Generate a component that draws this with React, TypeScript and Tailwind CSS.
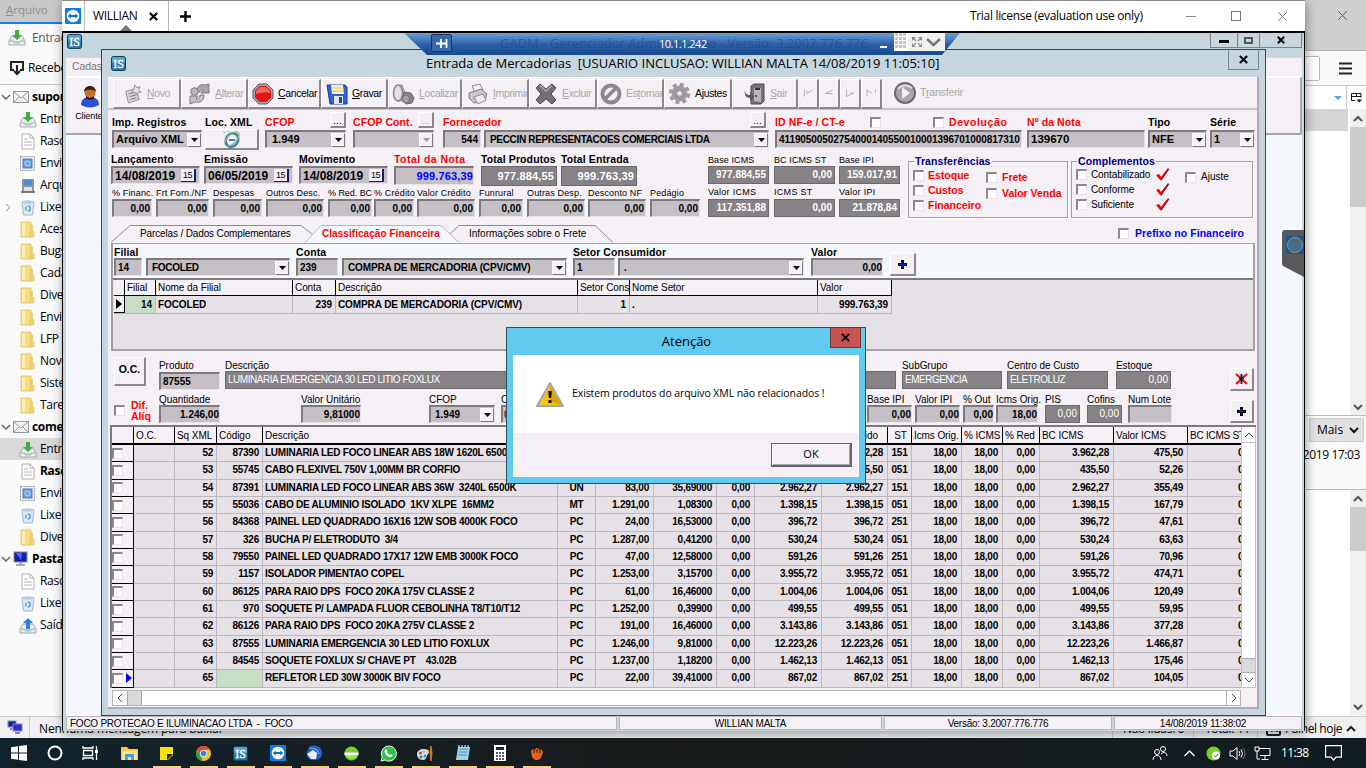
import React from 'react';

type Kids = { children?: React.ReactNode };

/* ---------- generic pieces ---------- */

const Check = ({ c = '' }: { c?: string }) => (
  <span className={`inline-block h-[11px] w-[11px] shrink-0 border-t-2 border-l-2 border-[#8b878b] border-r border-b border-r-[#e8e3e8] border-b-[#e8e3e8] bg-white ${c}`} />
);

const Drop = ({ dim = false }: { dim?: boolean }) => (
  <span className="flex h-[14px] w-[14px] shrink-0 items-center justify-center border border-t-white border-l-white border-r-[#7d797d] border-b-[#7d797d] bg-[#f5f0f5]">
    <svg width="7" height="4" viewBox="0 0 7 4"><path d="M0 0h7L3.5 4z" fill={dim ? '#a09ca0' : '#000'} /></svg>
  </span>
);

const Field = ({ c = '', children, drop, dim, tone = 'bg-[#c5c0c5] text-black' }: Kids & { c?: string; drop?: boolean; dim?: boolean; tone?: string }) => (
  <div className={`flex h-[18px] shrink-0 items-center overflow-hidden whitespace-pre border-t-2 border-l-2 border-r border-b border-t-[#7d797d] border-l-[#7d797d] border-r-[#e8e3e8] border-b-[#e8e3e8] pl-[2px] font-bold ${tone} ${c}`}>
    <span className="flex-1 leading-none">{children}</span>
    {drop && <Drop dim={dim} />}
  </div>
);

const Dark = ({ c = '', children }: Kids & { c?: string }) => (
  <div className={`flex h-[18px] shrink-0 items-center overflow-hidden whitespace-pre border border-[#6c696c] bg-[#868286] px-[2px] text-white ${c}`}>
    <span className="flex-1 leading-none">{children}</span>
  </div>
);

const Btn = ({ c = '', children }: Kids & { c?: string }) => (
  <div className={`flex shrink-0 items-center justify-center border border-t-white border-l-white border-r-2 border-b-2 border-r-[#8b878b] border-b-[#8b878b] bg-[#f5f0f5] ${c}`}>{children}</div>
);

const Col = ({ w, label, lc = '', children }: Kids & { w: string; label: React.ReactNode; lc?: string }) => (
  <div className={`shrink-0 ${w}`}>
    <div className={`flex items-center whitespace-pre leading-none ${lc}`}>{label}</div>
    {children}
  </div>
);

const Plus = () => (
  <svg width="11" height="11" viewBox="0 0 11 11"><path d="M4 1h3v3h3v3H7v3H4V7H1V4h3z" fill="#000" /><path d="M4 3h2v2h3v1H6v3H5V6H2V5h2z" fill="#1414e6" /></svg>
);

const X = ({ s = 10, w = 2 }: { s?: number; w?: number }) => (
  <svg width={s} height={s} viewBox="0 0 10 10"><path d="M1 1l8 8M9 1L1 9" stroke="currentColor" strokeWidth={w} fill="none" /></svg>
);

const IsLogo = ({ s = 15 }: { s?: number }) => (
  <svg width={s} height={s} viewBox="0 0 15 15">
    <rect x=".5" y=".5" width="14" height="14" rx="2" fill="#2d78a8" stroke="#123f5e" />
    <rect x="1" y="1" width="13" height="6" rx="1.5" fill="#5aa3cc" />
    <text x="7.5" y="12" fontSize="12" textAnchor="middle" fill="#fff" stroke="#fff" strokeWidth=".3" fontFamily="Liberation Serif, serif">IS</text>
  </svg>
);

const TvLogo = ({ s = 16 }: { s?: number }) => (
  <svg width={s} height={s} viewBox="0 0 16 16">
    <rect width="16" height="16" rx="1" fill="#0b7de3" />
    <circle cx="8" cy="8" r="6.3" fill="#fff" />
    <path d="M2.6 8l3.2-2.6v1.7h4.4V5.4L13.4 8l-3.2 2.6V8.900H5.800v1.700z" fill="#0b6fd0" />
  </svg>
);

/* ---------- mail client behind ---------- */

const Tray = ({ up = false }: { up?: boolean }) => (
  <svg width="18" height="17" viewBox="0 0 18 17">
    <path d="M4 7h10l3 5v4H1v-4z" fill="#e9eef2" stroke="#a3abb3" />
    <path d="M1.500 12h4l1 2h5l1-2h4" fill="#cdd6de" stroke="#a3abb3" />
    {up ? <path d="M7 12V6H4l5-5 5 5h-3v6z" fill="#2f7de0" /> : <path d="M7 1h4v5h3l-5 5-5-5h3z" fill="#3fae3a" />}
  </svg>
);
const Doc = () => (
  <svg width="16" height="17" viewBox="0 0 16 17"><path d="M2 1h8l4 4v11H2z" fill="#fafafa" stroke="#b4b4b4" /><path d="M10 1v4h4" fill="none" stroke="#b4b4b4" /><path d="M4 6h4M4 9h8M4 12h8" stroke="#bbb" /></svg>
);
const Stamp = () => (
  <svg width="17" height="17" viewBox="0 0 17 17"><rect x="1.500" y="1.500" width="14" height="14" fill="#f2f2f2" stroke="#999" strokeDasharray="2 1" /><rect x="4" y="4" width="9" height="9" fill="#6f9fd8" stroke="#4b7bb5" /><circle cx="8.500" cy="8.500" r="2.500" fill="none" stroke="#c6dcf5" /></svg>
);
const Bin = () => (
  <svg width="16" height="17" viewBox="0 0 16 17"><path d="M2 3h12l-1.500 13h-9z" fill="#dbe9f3" stroke="#9fb6c6" /><ellipse cx="8" cy="3" rx="6" ry="1.800" fill="#b7cddc" /><circle cx="8" cy="9.500" r="2.300" fill="none" stroke="#4d93cf" strokeWidth="1.300" strokeDasharray="3.500 1.300" /></svg>
);
const Folder = () => (
  <svg width="15" height="17" viewBox="0 0 15 17"><path d="M1 1h10v15H1z" fill="#f5dd85" stroke="#dfc062" strokeWidth=".8" /><path d="M2 2h3v13H2z" fill="#fbeeb0" /><path d="M11 4h1.500v5l1.500 2v5h-4v-5l1-2z" fill="#efd272" stroke="#dfc062" strokeWidth=".6" /></svg>
);
const Mail = () => (
  <svg width="16" height="12" viewBox="0 0 16 12"><rect x=".5" y=".5" width="15" height="11" fill="#f3f3f3" stroke="#979797" /><path d="M1 1l7 6 7-6M1 11l5-5M15 11l-5-5" fill="none" stroke="#979797" /></svg>
);
const Pc = () => (
  <svg width="15" height="16" viewBox="0 0 15 16"><rect x="1" y="1" width="13" height="10" fill="#1220b8" stroke="#8c8c8c" /><path d="M3 2l5 7 1-7z" fill="#4a6bff" /><path d="M6 11h3v2h3v2H3v-2h3z" fill="#aaa" /></svg>
);
const Archive = () => (
  <svg width="16" height="17" viewBox="0 0 16 17"><path d="M2 2h12v13H2z" fill="#8b9299" /><path d="M4 3h8v5H4z" fill="#4c8ed0" /><path d="M4 10h8v4H4z" fill="#e4e4e4" /><path d="M1 14h14v2H1z" fill="#777" /></svg>
);

const tree: [string, string, boolean?][] = [
  ['acc', 'suporte', true], ['in', 'Entrada'], ['doc', 'Rascunhos'], ['sent', 'Enviados'], ['arc', 'Arquivos'], ['bin', 'Lixeira'],
  ['f', 'Acesso'], ['f', 'Bugs'], ['f', 'Cadastro'], ['f', 'Diversos'], ['f', 'Enviados'], ['f', 'LFP'], ['f', 'Novos'], ['f', 'Sistema'], ['f', 'Tarefas'],
  ['acc', 'comercial', true], ['in', 'Entrada'], ['doc', 'Rascunhos', true], ['sent', 'Enviados'], ['bin', 'Lixeira'], ['f', 'Diversos'],
  ['pc', 'Pastas', true], ['doc', 'Rascunhos'], ['bin', 'Lixeira'], ['out', 'Saída'],
];
const treeIcon: Record<string, React.ReactNode> = {
  acc: <Mail />, in: <Tray />, doc: <Doc />, sent: <Stamp />, arc: <Archive />, bin: <Bin />, f: <Folder />, pc: <Pc />, out: <Tray up />,
};

const Chev = ({ d, c = '#404040', w = 2 }: { d: 'u' | 'd'; c?: string; w?: number }) => (
  <svg width="10" height="7" viewBox="0 0 10 7"><path d={d === 'u' ? 'M1 6l4-4 4 4' : 'M1 1l4 4 4-4'} fill="none" stroke={c} strokeWidth={w} /></svg>
);

const MailClient = () => (
  <div className="flex h-[738px] flex-col bg-white font-['Open_Sans','Noto_Sans',sans-serif] text-[12px] text-black">
    <div className="flex h-[716px] justify-between">
      <div className="w-[300px] bg-[#fafafa]">
        <div className="h-[22px] bg-[#c8c8c8] pl-[6px] text-[11.500px] leading-[20px] text-[#8f8f8f]"><u>A</u>rquivo</div>
        <div className="h-[2px] bg-[#0a84ff]" />
        <div className="flex h-[27px] items-center gap-[6px] pl-[8px] tracking-[-0.3px] text-[#555]"><Tray />Entrada</div>
        <div className="flex h-[34px] items-center gap-[3px] border-b border-[#c8c8c8] pl-[9px] tracking-[-0.3px]">
          <svg width="16" height="16" viewBox="0 0 16 16"><path d="M5 10H2V2h12v8h-3" fill="none" stroke="#222" strokeWidth="2" /><path d="M8 5v9M5 11l3 3 3-3" fill="none" stroke="#222" strokeWidth="2" /></svg>
          Receber
        </div>
        <div className="pt-[1px]">
          {tree.map(([k, t, b], i) => {
            const top = k === 'acc' || k === 'pc';
            return (
              <div key={i} className={`flex h-[22px] items-center whitespace-nowrap tracking-[-0.3px] ${b ? 'font-bold' : ''} ${i === 16 ? 'bg-[#d9d9d9]' : ''}`}>
                <span className={`flex shrink-0 items-center justify-center ${top ? 'w-[12px]' : 'w-[17px]'}`}>
                  {top && <Chev d="d" c="#666" w={1.500} />}
                  {i === 5 && <svg className="-ml-px" width="6" height="9" viewBox="0 0 6 9"><path d="M1 1l4 3.500-4 3.500" fill="none" stroke="#999" /></svg>}
                </span>
                <span className={`flex shrink-0 justify-center ${top ? 'w-[17px]' : 'w-[21px]'}`}>{treeIcon[k]}</span>
                <span className={top ? 'pl-[3px]' : 'pl-[2px]'}>{t}</span>
              </div>
            );
          })}
        </div>
      </div>
      <div className="flex w-[166px] flex-col">
        <div className="flex h-[51px] items-start justify-end border-b border-[#b4b4b4] bg-[#cfcfcf] pt-[10px] pr-[18px] text-[#666]"><X s={11} w={0.9} /></div>
        <div className="flex h-[34px] items-center justify-end bg-[#f9f9f9] pr-[14px]">
          <span className="mr-[19px] h-[25px] w-[80px] rounded-[2px] border border-[#b8b8b8] bg-white" />
          <svg width="13" height="13" viewBox="0 0 13 13"><path d="M0 1.500h13M0 6.500h13M0 11.500h13" stroke="#222" strokeWidth="2" /></svg>
        </div>
        <div className="flex h-[24px] items-center justify-end border-t border-[#c8c8c8] pr-[4px]">
          <svg width="8" height="4" viewBox="0 0 8 4"><path d="M0 0h8L4 4z" fill="#5aa7d6" /></svg>
          <span className="mx-[4px] h-full w-px bg-[#ccc]" />
          <svg width="11" height="11" viewBox="0 0 11 11"><path d="M.5 8.500V1.500h9.500v4M.5 4.500h9.500M5.500 1.500v3M4 8.500H.5" fill="none" stroke="#111" /><path d="M5.500 7.500h5.500l-2.750 3z" fill="#111" /></svg>
        </div>
        <div className="flex h-[306px]">
          <div className="flex-1 pr-[2px]"><div className="h-[22px] bg-[#d5d5d5]" /></div>
          <div className="flex w-[16px] flex-col items-center justify-between bg-[#f0f0f0] pb-[4px]">
            <div className="flex w-full flex-col items-center pt-[6px]"><Chev d="u" c="#555" /><span className="mt-[5px] h-[80px] w-full bg-[#cdcdcd]" /></div>
            <Chev d="d" c="#555" />
          </div>
        </div>
        <div className="flex h-[75px] flex-col items-end border-t border-b border-[#b4bccb] bg-[#fafafa] pt-[2px]">
          <div className="mr-[2px] flex h-[24px] w-[55px] items-center justify-center gap-[6px] border border-[#ccc] bg-[#e1e1e1] pl-[3px]">Mais<Chev d="d" c="#111" /></div>
          <div className="pt-[4px] pr-[6px] tracking-[-0.4px]">02/05/2019 17:03</div>
        </div>
        <div className="flex flex-1 justify-end">
          <div className="flex w-[16px] flex-col items-center justify-between bg-[#f0f0f0] pb-[5px]">
            <div className="flex w-full flex-col items-center pt-[5px]"><Chev d="u" c="#555" /><span className="mt-[5px] h-[44px] w-full bg-[#cdcdcd]" /></div>
            <Chev d="d" c="#555" />
          </div>
        </div>
      </div>
    </div>
    <div className="flex h-[22px] items-center border-t border-[#ccc] bg-[#f0f0f0] tracking-[-0.3px]">
      <span className="flex w-[29px] justify-center">
        <svg width="16" height="15" viewBox="0 0 16 15"><rect x="1" y="1" width="8" height="6" fill="#1220b8" stroke="#889" /><rect x="6" y="4" width="9" height="7" fill="#2233d8" stroke="#889" /><path d="M8 12h5v2H8zM3 8h2v2H3z" fill="#888" /></svg>
      </span>
      <span className="h-full w-px bg-[#ccc]" />
      <span className="w-[1082px] pt-[2px] pl-[9px] text-[12px] tracking-[-0.1px]">Nenhuma mensagem para baixar</span>
      <span className="flex h-full w-[81px] items-center border-l border-[#ccc] pt-[2px] pl-[10px]">Não lidas: 0</span>
      <span className="flex h-full w-[64px] items-center border-l border-[#ccc] pt-[2px] pl-[11px]">Total: 11</span>
      <span className="flex h-full flex-1 items-center gap-[4px] border-l border-[#ccc] pt-[2px] pl-[8px]">
        <span className="flex h-[15px] w-[15px] items-end justify-center rounded-[2px] border-2 border-[#222] text-[9px] leading-[10px] font-bold">14</span>
        <span className="tracking-[-0.400px]">Painel hoje</span> <Chev d="u" c="#222" />
      </span>
    </div>
  </div>
);

/* ---------- toolbar ---------- */

const icoNovo = <svg width="20" height="22" viewBox="0 0 22 22"><path d="M3 8l11-3 4 12-12 4z" fill="#d6d3d6" stroke="#8d8a8d" /><path d="M6 11l7-2M7 14l7-2M8 17l7-2" stroke="#8d8a8d" strokeWidth="1.300" /><path d="M13 1l2 3 4-1-2 3 3 3-4 0-1 3-2-3-4 0 3-3z" fill="#e6e3e6" stroke="#8d8a8d" /></svg>;
const icoAlt = <svg width="23" height="22" viewBox="0 0 23 22"><path d="M9 8c0-5 4-7 8-6l4-1v9h-8l2-3c-2-1-3 0-3 2z" fill="#a9a6a9" stroke="#7d7a7d" /><circle cx="6.500" cy="8.500" r="3.800" fill="#b9b6b9" stroke="#7d7a7d" /><path d="M16 12c0 6-4 8-9 7l-5 2v-8h8l-2 3c2 1 4-1 4-4z" fill="#c6c3c6" stroke="#7d7a7d" /></svg>;
const icoCan = <svg width="22" height="22" viewBox="0 0 22 22"><path d="M7 1h8l6 6v8l-6 6H7l-6-6V7z" fill="#a8a8a8" stroke="#5a5a5a" /><path d="M7.500 3h7l4.500 4.500v7L14.500 19h-7L3 14.500v-7z" fill="#e01414" /><path d="M8 4h6l4 4v2c-5-2-9 0-14 1V8z" fill="#f46a5a" /></svg>;
const icoGra = <svg width="22" height="22" viewBox="0 0 22 22"><path d="M1 2h18l2 2v17H4z" fill="#2f62d8" stroke="#173a94" /><path d="M5 2h12l1 9H6z" fill="#f6f1c4" /><path d="M6 5h10M7 8h10" stroke="#d3c568" /><path d="M8 13h9v8H8z" fill="#dfe6f0" /><path d="M13 14h3v6h-3z" fill="#1d46a8" /></svg>;
const icoLoc = <svg width="23" height="22" viewBox="0 0 23 22"><path d="M6 2h4l3 8v5l-3 3H6z" fill="#c6c3c6" stroke="#8a878a" /><ellipse cx="6" cy="10" rx="4.500" ry="8" fill="#e3e0e3" stroke="#8a878a" strokeWidth="1.500" /><path d="M12 9l7 1 3 5-2 5-6 1-4-4z" fill="#8a878a" stroke="#6c696c" /><ellipse cx="14" cy="16" rx="3.500" ry="4" fill="#a9a6a9" stroke="#6c696c" /></svg>;
const icoImp = <svg width="22" height="22" viewBox="0 0 22 22"><path d="M5 3l8-2 3 6-8 3z" fill="#eee" stroke="#8d8a8d" /><path d="M2 10l12-4 6 5-2 6-11 3-5-5z" fill="#c9c6c9" stroke="#7d7a7d" /><path d="M7 14l9-3 3 6-8 4z" fill="#efecef" stroke="#8d8a8d" /></svg>;
const icoExc = <svg width="24" height="24" viewBox="0 0 24 24"><path d="M6 2l6 5 6-5 4 4-5 6 5 6-4 4-6-5-6 5-4-4 5-6-5-6z" fill="#747174" stroke="#4e4c4e" strokeLinejoin="round" /><path d="M6 3.500l6 5.500 6-5.500" fill="none" stroke="#aaa7aa" strokeWidth="1.500" /></svg>;
const icoEst = <svg width="22" height="22" viewBox="0 0 22 22"><circle cx="11" cy="11" r="8.500" fill="#f0edf0" stroke="#8d8a8d" strokeWidth="4" /><path d="M5 16L16 5" stroke="#8d8a8d" strokeWidth="3.500" /></svg>;
const icoAju = <svg width="23" height="23" viewBox="0 0 23 23"><circle cx="11.500" cy="11.500" r="9" fill="none" stroke="#a09da0" strokeWidth="3.500" strokeDasharray="4 3.070" /><circle cx="11.500" cy="11.500" r="5.800" fill="#c6c3c6" stroke="#a09da0" strokeWidth="4.500" /><circle cx="11.500" cy="11.500" r="4" fill="#b4b1b4" stroke="#858285" /><circle cx="11.500" cy="11.500" r="2" fill="#efecef" /></svg>;
const icoSai = <svg width="22" height="22" viewBox="0 0 22 22"><path d="M7 3l3-2h10v17l-3 3H7z" fill="#767376" stroke="#4a484a" /><path d="M10 5h7v14l-7-1z" fill="#bbb8bb" /><path d="M11 6h5" stroke="#333" strokeWidth="2" /><circle cx="12" cy="13" r="1" fill="#333" /><path d="M1 7c0 4 2 5 5 5v-3l4 5-4 4v-3c-4 0-6-3-5-8z" fill="#5a585a" /></svg>;
const icoTra = <svg width="24" height="24" viewBox="0 0 24 24"><circle cx="12" cy="12" r="10" fill="#a9a6a9" stroke="#6c696c" strokeWidth="2" /><path d="M5 8c3-4 10-5 14-1" stroke="#dedbde" strokeWidth="2" fill="none" /><path d="M9 6l8 6-8 6z" fill="#f2eff2" /></svg>;

const tools: [string, React.ReactNode, string, string, string, boolean][] = [
  ['w-[68px] pl-[9px]', icoNovo, '', 'N', 'ovo', false],
  ['w-[67px] pl-[6px]', icoAlt, '', 'A', 'lterar', false],
  ['w-[73px] pl-[3px]', icoCan, '', 'C', 'ancelar', true],
  ['w-[67px] pl-[4px]', icoGra, '', 'G', 'ravar', true],
  ['w-[74px] pl-[3px]', icoLoc, '', 'L', 'ocalizar', false],
  ['w-[67px] pl-[4px]', icoImp, '', 'I', 'mprimir', false],
  ['w-[68px] pl-[4px]', icoExc, '', 'E', 'xcluir', false],
  ['w-[67px] pl-[2px]', icoEst, 'Es', 't', 'ornar', false],
  ['w-[68px] pl-[3px]', icoAju, 'A', 'j', 'ustes', true],
  ['w-[66px] pl-[11px]', icoSai, '', 'S', 'air', false],
];

const Toolbar = () => (
  <div className="flex h-[33px] border-b-2 border-[#c9c4c9] border-t border-t-[#fff] pt-px pl-[5px] text-[10.500px]">
    {tools.map(([w, ic, p, u, t, on], i) => (
      <Btn key={i} c={`h-[30px] !justify-start gap-[4px] overflow-hidden whitespace-nowrap tracking-[-0.350px] ${on ? 'text-black' : 'text-[#aaa6aa]'} ${w}`}>
        <span className="shrink-0">{ic}</span>
        <span>{p}<u>{u}</u>{t}</span>
      </Btn>
    ))}
    {['M3.500 2.500v7M11.500 3L6 6.500M6 6.500v-3', 'M11 3L3.500 6.500h7', 'M3.500 2.500v7l7-3.500H7', 'M3 9.500V3l5 3.500M11.500 2.500v3'].map((d, i) => (
      <Btn key={i} c="h-[30px] w-[21px]"><svg width="14" height="13" viewBox="0 0 14 13"><path d={d} fill="none" stroke="#b3afb3" /></svg></Btn>
    ))}
    <div className="flex items-center gap-[3px] pb-px pl-[11px] tracking-[-0.150px] text-[#aaa6aa]">{icoTra}<span>T<u>r</u>ansferir</span></div>
  </div>
);

/* ---------- form rows ---------- */

const L1 = 'h-[20px] pt-[4px] text-[10.500px] font-bold tracking-[0.1px]';
const L2 = 'h-[15px] pt-[2px] text-[10.500px] font-bold tracking-[0.1px]';
const L3 = 'h-[12px] text-[9px] tracking-[0.15px]';
const R = 'text-[#ff0000]';

const Dots = ({ c, dim = false }: { c: string; dim?: boolean }) => (
  <Btn c={`h-[16px] w-[16px] mt-[-4px] pt-[3px] text-[10px] leading-none font-normal ${dim ? 'text-[#999]' : 'text-black'} ${c}`}>...</Btn>
);

const Row1 = () => (
  <div className="flex h-[41px] pl-[4px] text-[11px]">
    <Col w="w-[93px]" label="Imp. Registros" lc={L1}><Field c="w-[90px]" drop>Arquivo XML</Field></Col>
    <Col w="w-[60px]" label="Loc. XML" lc={L1}>
      <Btn c="-mt-px h-[21px] w-[54px]">
        <svg width="22" height="19" viewBox="0 0 22 19"><ellipse cx="11" cy="10" rx="6" ry="7" transform="rotate(30 11 10)" fill="none" stroke="#3f7fae" strokeWidth="2.500" /><ellipse cx="11" cy="9" rx="9" ry="4.500" transform="rotate(-45 11 9)" fill="none" stroke="#8fb67a" strokeWidth="1.300" /><path d="M8 10h6" stroke="#3f7fae" strokeWidth="2" /><path d="M2 2l3 1M6 1l2 1" stroke="#8cc" /></svg>
      </Btn>
    </Col>
    <Col w="w-[88px]" label={<><span className="flex-1">CFOP</span><Dots c="mr-[7px]" /></>} lc={`${L1} ${R}`}><Field c="w-[81px] pl-[5px]" drop>1.949</Field></Col>
    <Col w="w-[90px]" label={<><span className="flex-1">CFOP Cont.</span><Dots c="mr-[9px]" dim /></>} lc={`${L1} ${R}`}><Field c="w-[81px]" drop dim /></Col>
    <Col w="w-[41px]" label="Fornecedor" lc={`${L1} ${R}`}><Field c="w-[38px] pr-[2px] text-right text-[10px]">544</Field></Col>
    <Col w="w-[291px]" label={<><span className="flex-1" /><Dots c="mr-[9px]" /></>} lc={L1}><Field c="w-[285px] pl-[4px] text-[10px] tracking-[-0.330px]" drop>PECCIN REPRESENTACOES COMERCIAIS LTDA</Field></Col>
    <Col w="w-[252px]" label={<><span className="w-[95px]">ID NF-e / CT-e</span><Check c="mr-[52px]" /><Check c="mr-[5px]" /><span className="tracking-[0.600px]">Devolução</span></>} lc={`${L1} ${R}`}>
      <Field c="w-[247px] pl-0 text-[10px] tracking-[-0.080px]">41190500502754000140550010001396701000817310</Field>
    </Col>
    <Col w="w-[121px]" label="Nº da Nota" lc={`${L1} ${R}`}><Field c="w-[118px] pl-0 text-[11.500px]">139670</Field></Col>
    <Col w="w-[62px]" label="Tipo" lc={L1}><Field c="w-[59px]" drop>NFE</Field></Col>
    <Col w="w-[45px]" label="Série" lc={L1}><Field c="w-[45px] pl-0" drop>1</Field></Col>
  </div>
);

const Cal = () => <span className="mr-[3px] inline-flex h-[13px] w-[15px] items-center justify-center border-r-2 border-b border-[#1a1a6a] bg-[#f5f0f5] text-[9px] leading-none font-normal tracking-[-0.5px]">15</span>;
const DateF = ({ children }: Kids) => (
  <Field c="w-[89px] pl-0 text-[12px]"><span className="flex items-center justify-between">{children}<Cal /></span></Field>
);

const small: [string, string, string][] = [
  ['w-[44px]', '% Financ.', 'w-[40px]'], ['w-[57px]', 'Frt Forn./NF', 'w-[53px]'], ['w-[53px]', 'Despesas', 'w-[49px]'], ['w-[62px]', 'Outros Desc.', 'w-[58px]'],
  ['w-[46px]', '% Red. BC', 'w-[44px]'], ['w-[43px]', '% Crédito', 'w-[40px]'], ['w-[62px]', 'Valor Crédito', 'w-[58px]'], ['w-[48px]', 'Funrural', 'w-[44px]'],
  ['w-[61px]', 'Outras Desp.', 'w-[58px]'], ['w-[62px]', 'Desconto NF', 'w-[58px]'], ['w-[52px]', 'Pedágio', 'w-[50px]'],
];

const taxes: [string, string][] = [['Base ICMS', '977.884,55'], ['BC ICMS ST', '0,00'], ['Base IPI', '159.017,91'], ['Valor ICMS', '117.351,88'], ['ICMS ST', '0,00'], ['Valor IPI', '21.878,84']];

const Tick = () => <svg width="15" height="13" viewBox="0 0 15 13"><path d="M1 7l3-1 2 3 7-9 1 1-7.500 11H5z" fill="#f00000" /><path d="M6 12.500L14 1" stroke="#300" strokeWidth=".7" /></svg>;

const Group = ({ c, title, children }: Kids & { c: string; title: string }) => (
  <fieldset className={`h-[62px] border border-[#a39fa3] px-[4px] shadow-[1px_1px_0_#fff] ${c}`}>
    <legend className="ml-[1px] px-px text-[10.500px] leading-[10px] font-bold tracking-[0.1px] text-[#00007b]">{title}</legend>
    {children}
  </fieldset>
);

const Rows23 = () => (
  <div className="flex h-[68px]">
    <div className="w-[600px] shrink-0">
      <div className="flex h-[36px] pl-[3px]">
        <Col w="w-[93px]" label="Lançamento" lc={L2}><DateF>14/08/2019</DateF></Col>
        <Col w="w-[95px]" label="Emissão" lc={L2}><DateF>06/05/2019</DateF></Col>
        <Col w="w-[95px]" label="Movimento" lc={L2}><DateF>14/08/2019</DateF></Col>
        <Col w="w-[87px]" label="Total da Nota" lc={`${L2} tracking-[0.450px] ${R}`}><Field c="h-[19px] w-[80px] text-right text-[11px] tracking-[0.150px]" tone="bg-[#c5c0c5] text-[#0000ff]">999.763,39</Field></Col>
        <Col w="w-[80px]" label="Total Produtos" lc={L2}><Dark c="h-[20px] w-[76px] text-right text-[11px] font-bold tracking-[0.150px]">977.884,55</Dark></Col>
        <Col w="w-[76px]" label="Total Entrada" lc={L2}><Dark c="h-[20px] w-[76px] text-right text-[11px] font-bold tracking-[0.150px]">999.763,39</Dark></Col>
      </div>
      <div className="flex pl-[4px]">
        {small.map(([w, l, f], i) => <Col key={l} w={w} label={l} lc={i === 4 ? 'h-[12px] text-[9px] tracking-[-0.050px]' : L3}><Field c={`pr-px text-right text-[10px] ${f}`}>0,00</Field></Col>)}
      </div>
    </div>
    <div className="grid w-[200px] shrink-0 grid-cols-[66px_65px_65px] content-start">
      {taxes.map(([l, v], i) => (
        <Col key={l} w={i < 3 ? 'h-[34px]' : ''} label={l} lc={i < 3 ? 'h-[15px] pt-[3px] text-[9px] tracking-[0.1px]' : 'h-[14px] text-[9px] tracking-[0.3px]'}>
          <Dark c="w-[61px] text-right text-[10px] font-bold">{v}</Dark>
        </Col>
      ))}
    </div>
    <Group c="mt-[5px] w-[160px] shrink-0" title="Transferências">
      <div className="flex gap-[16px] text-[10.500px] leading-none font-bold text-[#ff0000]">
        <div className="flex w-[57px] flex-col gap-[4px] pt-[4px]">
          {['Estoque', 'Custos', 'Financeiro'].map((t) => <span key={t} className="flex items-center gap-[4px]"><Check />{t}</span>)}
        </div>
        <div className="flex flex-col gap-[5px] pt-[6px]">
          {['Frete', 'Valor Venda'].map((t) => <span key={t} className="flex items-center gap-[5px] whitespace-nowrap"><Check />{t}</span>)}
        </div>
      </div>
    </Group>
    <Group c="mt-[5px] ml-[3px] w-[182px] shrink-0" title="Complementos">
      <div className="flex text-[10px] leading-none">
        <div className="flex w-[109px] flex-col gap-[2px] pt-[2px]">
          {['Contabilizado', 'Conforme', 'Suficiente'].map((t) => <span key={t} className="flex h-[13px] items-center gap-[4px]"><Check /><span className="w-[60px] tracking-[-0.100px]">{t}</span><Tick /></span>)}
        </div>
        <span className="flex h-[18px] items-center gap-[5px] pt-[4px]"><Check />Ajuste</span>
      </div>
    </Group>
  </div>
);

const Tabs = () => (
  <div className="flex h-[24px] items-end">
    <div className="relative h-[18px] w-[1010px] shrink-0">
      <svg className="absolute top-0 left-0" width="520" height="18" viewBox="0 0 520 18">
        <path d="M3 17.500L22 .5H193L204 9" fill="none" stroke="#8f8b8f" />
        <path d="M342 9l9-8.500H487L505 17.500" fill="none" stroke="#8f8b8f" />
        <path d="M197 18L213 .5H333L351 18z" fill="#f5f9fe" />
        <path d="M197 17.500L213 .5H333L351 17.500" fill="none" stroke="#b9b5b9" />
      </svg>
      <div className="relative flex h-full items-center text-[10px] leading-none whitespace-nowrap">
        <span className="w-[182px] pl-[32px] tracking-[-0.14px]">Parcelas / Dados Complementares</span>
        <span className="w-[147px] pl-[32px] font-bold tracking-[0.05px] text-[#ff0000]">Classificação Financeira</span>
        <span className="pl-[32px]">Informações sobre o Frete</span>
      </div>
    </div>
    <div className="mb-[4px] flex items-center gap-[6px] text-[10.500px] leading-none font-bold tracking-[0.080px] whitespace-nowrap text-[#0000ff]"><Check />Prefixo no Financeiro</div>
  </div>
);

const LP = 'h-[14px] pt-[2px] text-[10.500px] font-bold tracking-[0.1px]';
const gridCols = 'grid grid-cols-[11px_31px_137px_43px_242px_52px_188px_74px]';
const Panel = () => (
  <div className="ml-[3px] flex h-[108px] w-[1144px] flex-col border-t border-l-2 border-r-2 border-b-2 border-[#a39fa3] bg-[#f5f9fe] text-[10px]">
    <div className="flex h-[34px] pl-[1px]">
      <Col w="w-[32px]" label="Filial" lc={LP}><Field c="w-[28px] pl-0">14</Field></Col>
      <Col w="w-[150px]" label=" " lc={LP}><Field c="w-[144px] pl-[4px] tracking-[-0.3px]" drop>FOCOLED</Field></Col>
      <Col w="w-[46px]" label="Conta" lc={LP}><Field c="w-[42px] pl-0">239</Field></Col>
      <Col w="w-[231px]" label=" " lc={LP}><Field c="w-[225px] pl-[4px] tracking-[-0.15px]" drop>COMPRA DE MERCADORIA (CPV/CMV)</Field></Col>
      <Col w="w-[45px]" label="Setor Consumidor" lc={LP}><Field c="w-[42px] pl-0">1</Field></Col>
      <Col w="w-[193px]" label=" " lc={LP}><Field c="w-[186px] pl-[4px]" drop>.</Field></Col>
      <Col w="w-[79px]" label="Valor" lc={LP}><Field c="w-[72px] text-right">0,00</Field></Col>
      <Btn c="mt-[9px] h-[23px] w-[26px]"><Plus /></Btn>
    </div>
    <div className="flex-1 border-t-2 border-[#7d797d] bg-[#e6e1e6] pl-px">
      <div className={`${gridCols} h-[16px] w-[778px] border-b border-black bg-[#f5f0f5] leading-[15px]`}>
        {['', 'Filial', 'Nome da Filial', 'Conta', 'Descrição', 'Setor Cons', 'Nome Setor', 'Valor'].map((t, i) => <span key={i} className="overflow-hidden border-r border-black pl-[2px] tracking-[-0.080px] whitespace-nowrap">{t}</span>)}
      </div>
      <div className={`${gridCols} h-[18px] w-[778px] border-b border-[#bcb7bc] leading-[17px] font-bold tracking-[-0.1px]`}>
        <span className="flex items-center border-r border-b border-black bg-[#f5f0f5] pl-[2px]"><svg width="6" height="10"><path d="M0 0l6 5-6 5z" /></svg></span>
        {['14', 'FOCOLED', '239', 'COMPRA DE MERCADORIA (CPV/CMV)', '1', '.', '999.763,39'].map((t, i) => (
          <span key={i} className={`border-r border-[#bcb7bc] pr-[3px] pl-[2px] whitespace-nowrap ${i % 2 === 0 ? 'text-right' : ''} ${i === 0 ? 'bg-[#c6dfc4]' : ''}`}>{t}</span>
        ))}
      </div>
    </div>
  </div>
);

const LI = 'h-[11px] text-[10px] tracking-[-0.05px]';
const Item = () => (
  <div className="h-[74px] text-[10px]">
    <div className="flex h-[41px] pt-[5px] pl-[6px]">
      <Btn c="mt-px h-[29px] w-[32px] pb-[2px] text-[10.500px] font-bold">O.C.</Btn>
      <div className="flex pt-[4px] pl-[13px]">
        <Col w="w-[66px]" label="Produto" lc={LI}><Field c="mt-px w-[61px] pl-0">87555</Field></Col>
        <Col w="w-[677px]" label="Descrição" lc={LI}><Dark c="w-[671px] px-0 tracking-[-0.460px]">LUMINARIA EMERGENCIA 30 LED LITIO FOXLUX</Dark></Col>
        <Col w="w-[105px]" label="SubGrupo" lc={LI}><Dark c="w-[100px] px-0 tracking-[-0.5px]">EMERGENCIA</Dark></Col>
        <Col w="w-[109px]" label="Centro de Custo" lc={LI}><Dark c="w-[101px] px-0 tracking-[-0.4px]">ELETROLUZ</Dark></Col>
        <Col w="w-[114px]" label="Estoque" lc={LI}><Dark c="w-[55px] text-right">0,00</Dark></Col>
        <Btn c="mt-[8px] h-[23px] w-[24px]">
          <svg width="13" height="12" viewBox="0 0 13 12"><path d="M1 1l11 10M12 1L1 11" stroke="#ff0000" strokeWidth="2" /><path d="M5.500 1h2v3l1.500 2-1.500 2v3h-2V8L4 6l1.500-2z" fill="#222" /></svg>
        </Btn>
      </div>
    </div>
    <div className="flex pt-[2px] pl-[6px]">
      <div className="flex w-[45px] items-center gap-[6px] pt-[4px] text-[10.500px] leading-[11px] font-bold text-[#ff0000]"><Check /><span>Dif.<br />Alíq</span></div>
      <Col w="w-[142px]" label="Quantidade" lc={LI}><Field c="w-[61px] text-right">1.246,00</Field></Col>
      <Col w="w-[128px]" label="Valor Unitário" lc={LI}><Field c="w-[60px] text-right">9,81000</Field></Col>
      <Col w="w-[72px]" label="CFOP" lc={LI}><Field c="w-[66px] pl-[4px]" drop>1.949</Field></Col>
      <Col w="w-[366px]" label="CST" lc={LI}><Field c="w-[40px] pl-px" tone="bg-[#c5c0c5] text-[#b00000]">0</Field></Col>
      <Col w="w-[48px]" label="Base IPI" lc={LI}><Field c="w-[45px] text-right">0,00</Field></Col>
      <Col w="w-[48px]" label="Valor IPI" lc={LI}><Field c="w-[45px] text-right">0,00</Field></Col>
      <Col w="w-[33px]" label="% Out" lc={LI}><Field c="w-[31px] pl-0 text-right">0,00</Field></Col>
      <Col w="w-[49px]" label="Icms Orig." lc={LI}><Field c="w-[42px] text-right">18,00</Field></Col>
      <Col w="w-[42px]" label="PIS" lc={LI}><Dark c="w-[35px] px-0 text-right">0,00</Dark></Col>
      <Col w="w-[41px]" label="Cofins" lc={LI}><Dark c="w-[35px] px-0 text-right">0,00</Dark></Col>
      <Col w="w-[102px]" label="Num Lote" lc={LI}><Field c="h-[17px] w-[44px]" /></Col>
      <Btn c="mt-[6px] h-[23px] w-[24px]"><Plus /></Btn>
    </div>
  </div>
);

/* ---------- items table ---------- */

const cols = 'grid grid-cols-[22px_41px_42px_46px_295px_38px_58px_63px_38px_67px_66px_24px_50px_41px_37px_74px_74px_54px]';
const heads = ['', 'O.C.', 'Sq XML', 'Código', 'Descrição', '', '', '', '', '', 'Líquido', 'ST', 'Icms Orig.', '% ICMS', '% Red', 'BC ICMS', 'Valor ICMS', 'BC ICMS ST'];
const data = [
  '52|87390|LUMINARIA LED FOCO LINEAR ABS 18W 1620L 6500K|UN|||3.962,28|151|475,50',
  '53|55745|CABO FLEXIVEL 750V 1,00MM BR CORFIO|MT|||435,50|051|52,26',
  '54|87391|LUMINARIA LED FOCO LINEAR ABS 36W  3240L 6500K|UN|83,00|35,69000|2.962,27|151|355,49',
  '55|55036|CABO DE ALUMINIO ISOLADO  1KV XLPE  16MM2|MT|1.291,00|1,08300|1.398,15|051|167,79',
  '56|84368|PAINEL LED QUADRADO 16X16 12W SOB 4000K FOCO|PC|24,00|16,53000|396,72|251|47,61',
  '57|326|BUCHA P/ ELETRODUTO  3/4|PC|1.287,00|0,41200|530,24|051|63,63',
  '58|79550|PAINEL LED QUADRADO 17X17 12W EMB 3000K FOCO|PC|47,00|12,58000|591,26|251|70,96',
  '59|1157|ISOLADOR PIMENTAO COPEL|PC|1.253,00|3,15700|3.955,72|051|474,71',
  '60|86125|PARA RAIO DPS  FOCO 20KA 175V CLASSE 2|PC|61,00|16,46000|1.004,06|051|120,49',
  '61|970|SOQUETE P/ LAMPADA FLUOR CEBOLINHA T8/T10/T12|PC|1.252,00|0,39900|499,55|051|59,95',
  '62|86126|PARA RAIO DPS  FOCO 20KA 275V CLASSE 2|PC|191,00|16,46000|3.143,86|051|377,28',
  '63|87555|LUMINARIA EMERGENCIA 30 LED LITIO FOXLUX|PC|1.246,00|9,81000|12.223,26|051|1.466,87',
  '64|84545|SOQUETE FOXLUX S/ CHAVE PT    43.02B|PC|1.237,00|1,18200|1.462,13|051|175,46',
  '65||REFLETOR LED 30W 3000K BIV FOCO|PC|22,00|39,41000|867,02|251|104,05',
].map((l) => l.split('|'));

const Table = () => (
  <div className="ml-[2px] flex h-[263px] w-[1146px] border-t-2 border-l-2 border-[#7d797d] text-[10px]">
    <div className="w-[1129px] shrink-0 overflow-hidden bg-[#e6e1e6]">
      <div className={`${cols} h-[18px] border-b-2 border-black bg-[#f5f0f5] leading-[17px]`}>
        {heads.map((t, i) => <span key={i} className={`overflow-hidden pl-[2px] whitespace-nowrap ${i === 17 ? 'tracking-[-0.250px]' : 'border-r border-black'} ${i === 11 ? 'text-center' : ''} ${i === 10 ? 'pr-[9px] text-right' : ''} ${i === 12 ? 'tracking-[-0.1px]' : 'tracking-[-0.05px]'}`}>{t}</span>)}
      </div>
      {data.map((r, k) => {
        const cells = ['', '', r[0], r[1], r[2], r[3], r[4], r[5], '0,00', r[6], r[6], r[7], '18,00', '18,00', '0,00', r[6], r[8], '0'];
        return (
          <div key={r[0]} className={`${cols} h-[17.330px] leading-[16.500px] font-bold tracking-[-0.25px]`}>
            <span className="flex items-center gap-[3px] border-r border-b border-black bg-[#f5f0f5]">
              <Check />{k === 13 && <svg width="6" height="10"><path d="M0 0l6 5-6 5z" fill="#0000ff" /></svg>}
            </span>
            {cells.slice(1).map((t, j) => {
              const i = j + 1;
              const al = i === 4 ? 'pl-[2px]' : i === 5 || i === 11 ? 'text-center' : i === 17 ? 'pl-[50px]' : i === 1 || i === 2 || i === 3 ? 'pr-[3px] text-right' : 'pr-[4px] text-right';
              return <span key={i} className={`overflow-hidden border-r border-b border-[#bcb7bc] whitespace-pre ${al} ${k === 13 && i === 3 ? 'bg-[#c6dfc4]' : ''}`}>{t}</span>;
            })}
          </div>
        );
      })}
    </div>
    <div className="flex w-[15px] flex-col justify-between border-x border-[#c5c0c5] bg-white">
      <div className="flex h-[16px] items-center justify-center border-b border-[#c5c0c5]"><Chev d="u" w={1} /></div>
      <div>
        <div className="h-[15px] border-y border-[#aaa] bg-[#d9d9d9]" />
        <div className="flex h-[15px] items-center justify-center border-b border-[#c5c0c5]"><Chev d="d" w={1} /></div>
      </div>
    </div>
  </div>
);

const HScroll = () => (
  <div className="mt-[2px] ml-[4px] flex h-[16px] w-[1129px] items-center justify-between border border-[#b9b5b9] bg-white">
    <div className="flex h-full items-center">
      <svg width="14" height="8" viewBox="0 0 14 8"><path d="M9 0L5 4l4 4" fill="none" stroke="#444" /></svg>
      <span className="h-full w-[15px] border-x border-[#aaa] bg-[#d9d9d9]" />
    </div>
    <span className="flex h-full items-center border-l border-[#b9b5b9]"><svg width="13" height="8" viewBox="0 0 13 8"><path d="M5 0l4 4-4 4" fill="none" stroke="#444" /></svg></span>
  </div>
);

/* ---------- windows ---------- */

const Entry = () => (
  <div className="absolute top-[16px] left-[38px] flex h-[667px] w-[1165px] flex-col border border-[#3d464b] bg-[#c5d6de] px-[6px]">
    <div className="flex h-[27px] items-start">
      <span className="pt-[6px] pl-[3px]"><IsLogo /></span>
      <span className="w-[1104px] pt-[1px] pl-[300px] font-['Open_Sans','Noto_Sans',sans-serif] text-[13px] leading-[24px] tracking-[0px] whitespace-pre">Entrada de Mercadorias  [USUARIO INCLUSAO: WILLIAN MALTA 14/08/2019 11:05:10]</span>
      <span className="flex h-[20px] w-[31px] shrink-0 items-center justify-center border border-t-0 border-[#76858c]"><X s={9} w={2.300} /></span>
    </div>
    <div className="h-[632px] w-[1151px] overflow-hidden border-r-2 border-b-2 border-[#b0acb0] bg-[#f5f0f5] font-['Liberation_Sans',Arial,sans-serif]">
      <Toolbar />
      <Row1 />
      <Rows23 />
      <Tabs />
      <Panel />
      <Item />
      <Table />
      <HScroll />
    </div>
  </div>
);

const Remote = () => (
  <div className="relative h-[698px] overflow-hidden bg-[#c5d6de] pr-[2px] pl-[3px] font-['Liberation_Sans',Arial,sans-serif]">
    <div className="flex h-[24px] items-start justify-between">
      <span className="pt-[1px] pl-px"><IsLogo /></span>
      <div className="flex h-[15px] border border-t-0 border-[#76858c]">
        <span className="flex w-[26px] items-center justify-center"><span className="mt-[2px] h-[3px] w-[10px] bg-black" /></span>
        <span className="flex w-[23px] items-center justify-center border-x border-[#76858c]"><span className="h-[7px] w-[9px] border-2 border-[#555]" /></span>
        <span className="flex w-[41px] items-center justify-center"><X s={8} w={2.500} /></span>
      </div>
    </div>
    <div className="h-[19px] border-t border-[#dcd7dc] bg-[#f5f0f5] pl-[6px] text-[10.500px] leading-[17px] tracking-[-0.100px] text-[#777]">Cadastros</div>
    <div className="h-[59px] border-t-2 border-r-2 border-b-2 border-white border-b-[#a9a5a9] border-r-[#a9a5a9] bg-[#f5f0f5]">
      <div className="flex w-[48px] flex-col items-center pt-[7px] text-[9px] leading-[13px] tracking-[-0.100px]">
        <svg width="20" height="23" viewBox="0 0 20 23"><path d="M1 20c0-5 3-8 9-8s9 3 9 8q-9 5-18 0z" fill="#2a4fd8" /><circle cx="10" cy="7.500" r="5.500" fill="#c9702c" /><path d="M4 7c0-8 12-8 12 0-2-3-10-3-12 0z" fill="#3b2412" /><path d="M6 11q4 4 8 0v2q-4 3-8 0z" fill="#1a1410" /></svg>
        <span className="pt-[2px] pl-[2px]">Clientes</span>
      </div>
    </div>
    <div className="h-[581px] bg-[#f5f9fe]" />
    <div className="flex h-[14px] gap-[2px] text-[10px] leading-[13px] tracking-[-0.25px]">
      {[['w-[551px] pl-[3px]', 'FOCO PROTECAO E ILUMINACAO LTDA  -  FOCO'], ['w-[263px] text-center', 'WILLIAN MALTA'], ['w-[228px] text-center', 'Versão: 3.2007.776.776'], ['w-[188px] pr-[10px] text-center', '14/08/2019 11:38:02']].map(([w, t]) => (
        <span key={t} className={`border border-[#b9b5b9] bg-[#f5f0f5] whitespace-pre ${w}`}>{t}</span>
      ))}
    </div>
    <Entry />
    <div className="absolute top-0 left-[341px] h-[22px] w-[556px] bg-linear-to-b from-[#6f9fd4] via-[#2c62aa] to-[#164a8c] [clip-path:polygon(0_0,100%_0,538px_100%,23px_100%)]">
      <div className="flex h-full items-start font-['Open_Sans','Noto_Sans',sans-serif]">
        <span className="mt-px ml-[27px] flex h-[18px] w-[21px] items-center justify-center rounded-[2px] border border-[#16366a] bg-[#3a68a8]"><svg width="13" height="11" viewBox="0 0 13 11"><path d="M1 5.500h5M6 1v9M6 5.500h5M11.500 1v9" stroke="#fff" strokeWidth="1.800" fill="none" /></svg></span>
        <span className="relative ml-[48px] w-[366px] text-[13px] leading-[20px] whitespace-nowrap text-[#1c4680]/60">GADM - Gerenciador Administrativo - Versão: 3.2007.776.776
          <span className="absolute top-[1px] left-[159px] text-[11px] tracking-[-0.5px] text-white">10.1.1.242</span>
        </span>
        <span className="mt-[13px] ml-[14px] h-[2px] w-[7px] bg-white" />
      </div>
    </div>
    <div className="absolute top-0 left-[831px] flex h-[18px] w-[51px] items-center gap-[4px] bg-[#f1f1f1]">
      <svg width="14" height="18" viewBox="0 0 14 18"><rect width="14" height="18" fill="#fff" /><path d="M1 1.500h12M1 5.500h12M1 9.500h12M1 13.500h12" stroke="#c4c4c4" strokeWidth="3" strokeDasharray="3 1" /></svg>
      <svg width="10" height="10" viewBox="0 0 10 10"><path d="M6 4l3.500-3.500M6.500.5h3v3M4 6L.5 9.500M.5 6.500v3h3M4 4L.5.5M.5 3.500v-3h3M6 6l3.500 3.500M9.500 6.500v3h-3" fill="none" stroke="#8a8a8a" strokeWidth="1.200" /></svg>
      <svg width="15" height="9" viewBox="0 0 15 9"><path d="M1 1l6.500 6L14 1" fill="none" stroke="#777" strokeWidth="2.500" /></svg>
    </div>
    <svg className="absolute top-[197px] right-0" width="22" height="47" viewBox="0 0 22 47">
      <path d="M3 0h19v47L3 37q-3-1-3-4V3q0-3 3-3z" fill="#59595b" /><rect x="4" y="6" width="18" height="18" fill="#17598c" /><circle cx="13" cy="15" r="7.500" fill="#5b656c" stroke="#7f93a2" /><path d="M6.500 15l4-3v2h5v-2l4 3-4 3v-2h-5v2z" fill="#1b7cc8" />
    </svg>
    <div className="absolute top-[294px] left-[443px] flex h-[157px] w-[360px] flex-col border border-[#27505f] bg-[#62c9ef] px-[6px] pb-[6px] font-['Open_Sans','Noto_Sans',sans-serif]">
      <div className="flex h-[27px] items-start justify-end">
        <span className="flex-1 pl-[30px] text-center text-[13px] leading-[27px]">Atenção</span>
        <span className="-mr-[2px] flex h-[20px] w-[31px] items-center justify-center border border-t-0 border-[#7d3030] bg-[#c75452]"><X s={9} w={2.200} /></span>
      </div>
      <div className="flex h-[78px] items-center bg-white pl-[22px] text-[10.500px]">
        <svg width="30" height="27" viewBox="0 0 30 27"><path d="M15 2l13 23H2z" fill="#b9b9b9" stroke="#a5a5a5" strokeWidth="2" strokeLinejoin="round" /><path d="M15 4l11 20H4z" fill="#f6c415" /><path d="M15 4l11 20-11-4z" fill="#e0a400" /><path d="M13.200 10h3.600l-.6 7h-2.400zM13.500 19h3v3h-3z" fill="#111" /></svg>
        <span className="pl-[7px] tracking-[-0.100px] whitespace-nowrap">Existem produtos do arquivo XML não relacionados !</span>
      </div>
      <div className="flex flex-1 items-start justify-end bg-[#f5f0f5] pt-[10px] pr-[7px]">
        <span className="flex h-[24px] w-[81px] items-center justify-center border border-r-2 border-b-2 border-[#66636a] bg-[#f5f0f5] text-[11px] shadow-[inset_1px_1px_0_#fff,inset_-1px_-1px_0_#aaa6aa]">OK</span>
      </div>
    </div>
  </div>
);

const TeamViewer = () => (
  <div className="absolute top-0 left-[62px] h-[731px] w-[1243px] border-t border-[#8a8a8a] bg-white shadow-[1px_2px_10px_rgba(0,0,0,0.4)]">
    <div className="flex h-[30px] items-center font-['Open_Sans','Noto_Sans',sans-serif] text-[12px]">
      <span className="flex h-full w-[23px] items-center justify-center border-r border-[#b5b5b5]"><TvLogo /></span>
      <span className="relative flex h-full w-[84px] items-center border-r border-[#b5b5b5] pl-[8px]">
        <span className="w-[46px] tracking-[-0.350px]">WILLIAN</span><span className="ml-[10px] flex"><X s={9} w={2.400} /></span>
        <svg className="absolute bottom-0 left-[35px]" width="12" height="6" viewBox="0 0 12 6"><path d="M6 0l6 6H0z" fill="#777" /></svg>
      </span>
      <span className="flex-1 pl-[11px]"><svg width="11" height="11" viewBox="0 0 11 11"><path d="M5.500 0v11M0 5.500h11" stroke="#000" strokeWidth="2.400" /></svg></span>
      <span className="w-[173px] tracking-[-0.320px] whitespace-nowrap">Trial license (evaluation use only)</span>
      <span className="flex w-[162px] items-center pl-[43px] text-[#777]">
        <span className="h-px w-[10px] bg-[#888]" /><span className="ml-[35px] h-[10px] w-[10px] border border-[#777]" /><span className="ml-[36px]"><X s={11} w={0.9} /></span>
      </span>
    </div>
    <div className="h-[700px] border-x border-t-2 border-b border-black border-b-[#8d9aa1]"><Remote /></div>
  </div>
);

/* ---------- taskbar ---------- */

const apps: React.ReactNode[] = [
  <svg width="16" height="16" viewBox="0 0 16 16"><path d="M0 2.200L7 1.200V7.500H0zM8 1l8-1v7.500H8zM0 8.500h7v6.300l-7-1zM8 8.500h8V16l-8-1z" fill="#fff" /></svg>,
  <svg width="16" height="16" viewBox="0 0 16 16"><circle cx="8" cy="8" r="6.500" fill="none" stroke="#fff" strokeWidth="2" /></svg>,
  <svg width="18" height="16" viewBox="0 0 18 16"><path d="M1 1v2h10V1M1.500 5.500h9v5h-9zM1 15v-2h10v2M14.500 1v14" fill="none" stroke="#fff" strokeWidth="1.300" /><path d="M13 5h3v3h-3z" fill="#fff" /></svg>,
  <svg width="17" height="14" viewBox="0 0 17 14"><path d="M0 1h6l2 2h9v11H0z" fill="#f7c64c" /><path d="M1 5h15v9H1z" fill="#fde08a" /><path d="M4 14V8h9v6h-3v-3H7v3z" fill="#3da5e0" /></svg>,
  <svg width="13" height="13" viewBox="0 0 13 13"><path d="M0 0h13v8l-5 5H0z" fill="#fde100" /><path d="M7 13V7h6z" fill="#222" /></svg>,
  <svg width="15" height="15" viewBox="0 0 16 16"><circle cx="8" cy="8" r="8" fill="#f2c51d" /><path d="M1 4a8 8 0 0 1 14 0H8L5 9z" fill="#de4a3a" /><path d="M1 4l4 6 2 6A8 8 0 0 1 1 4z" fill="#2fa24f" /><circle cx="8" cy="8" r="3.800" fill="#fff" /><circle cx="8" cy="8" r="3" fill="#3f7fe8" /></svg>,
  <IsLogo s={15} />,
  <TvLogo s={16} />,
  <svg width="17" height="16" viewBox="0 0 17 16"><path d="M3 2c5-3 12-1 13 5s-5 9-10 8-6-6-5-8z" fill="#2363c4" /><path d="M1 9l6-4 4 3-1 6-5 0z" fill="#e9edf4" /><path d="M4 3l6 1 3 5" fill="none" stroke="#7fb0ea" /></svg>,
  <svg width="15" height="15" viewBox="0 0 15 15"><circle cx="7.500" cy="7.500" r="7" fill="#77cf1f" /><path d="M1 8a7 7 0 0 0 13 0z" fill="#a6e36a" /><path d="M.5 6.500h14v2.500H.5z" fill="#fff" /></svg>,
  <svg width="17" height="17" viewBox="0 0 17 17"><path d="M1 16l1.200-4A7.500 7.500 0 1 1 5 15z" fill="#2bc24b" stroke="#fff" /><path d="M5.500 4.500c2-1 2 2 1.500 2.500 1 2 2 2.500 3 3 1-1.500 3 0 2.500 1-2 3-8-1-8-5z" fill="#fff" /></svg>,
  <svg width="17" height="17" viewBox="0 0 17 17"><path d="M7 4c5 0 6 3 4 5s-1 6-5 6-6-3-6-6 3-5 7-5z" fill="#c9e2f4" /><circle cx="3.500" cy="8" r="1.500" fill="#e03a3a" /><circle cx="7" cy="6.500" r="1.300" fill="#f2b21d" /><circle cx="4" cy="12" r="1.500" fill="#2fa24f" /><circle cx="8" cy="11" r="1.500" fill="#3f7fe8" /><path d="M14 1l1 7-1 8-1-8z" fill="#d27a22" stroke="#d27a22" /></svg>,
  <svg width="16" height="17" viewBox="0 0 16 17"><path d="M3 2h12l-2 13H1z" fill="#9fd3e6" /><path d="M4 4h9M4 7h8M3 10h9" stroke="#4c94b4" /><path d="M4 0v3M7 0v3M10 0v3M13 0v3" stroke="#ddd" strokeWidth="1.200" /></svg>,
  <svg width="12" height="16" viewBox="0 0 12 16"><path d="M0 0h12v16H0z" fill="#fff" /><path d="M2 2h8v3H2z" fill="#1a262b" /><path d="M2 8h8M2 11h8M2 14h8" stroke="#1a262b" strokeWidth="1.500" strokeDasharray="2 1" /></svg>,
  <svg width="14" height="13" viewBox="0 0 14 13"><path d="M1 4l2-2 2 1 1-2 2 0 1 2 2-1 2 3-2 6-3 2H5L2 10z" fill="#e6611e" /><path d="M4 3v3M7 2v4M10 3v3" stroke="#3a1405" /></svg>,
];

const Taskbar = () => (
  <div className="flex h-[30px] items-stretch bg-linear-to-r from-[#10222b] via-[#191b1b] to-[#101c22] pl-px text-white">
    {apps.map((a, i) => (
      <span key={i} className={`flex shrink-0 items-center justify-center ${i < 3 ? 'w-[36px]' : 'w-[37px]'} ${i === 3 ? 'ml-[2px]' : ''}`}>
        <span className={`flex h-full w-[28px] items-center justify-center ${i > 3 ? 'border-b-2 border-[#f6ce7e] pt-[2px]' : ''}`}>{a}</span>
      </span>
    ))}
    <span className="flex-1" />
    <span className="flex items-center">
      <svg width="16" height="16" viewBox="0 0 16 16"><circle cx="5" cy="7" r="2.500" fill="none" stroke="#fff" /><path d="M1 15c0-6 8-6 8 0M9 9c3-3 6-1 6 2" fill="none" stroke="#fff" /><circle cx="11" cy="4" r="2.500" fill="none" stroke="#fff" /></svg>
      <svg className="ml-[16px]" width="11" height="7" viewBox="0 0 11 7"><path d="M.5 6l5-5 5 5" fill="none" stroke="#fff" strokeWidth="1.300" /></svg>
      <svg className="ml-[11px]" width="15" height="15" viewBox="0 0 15 15"><circle cx="7.500" cy="7.500" r="7" fill="#77cf1f" /><circle cx="10" cy="9.500" r="4" fill="#fff" /><path d="M8 9.500l1.500 1.500 2.500-3" fill="none" stroke="#444" /></svg>
      <svg className="ml-[8px]" width="17" height="15" viewBox="0 0 17 15"><path d="M1 5h3l4-3.500v12L4 10H1z" fill="none" stroke="#fff" /><path d="M10 5q1.500 2.500 0 5M12 3.500q3 4 0 8" fill="none" stroke="#fff" /><path d="M14 2q4 5.500 0 11" fill="none" stroke="#777" /></svg>
      <svg className="ml-[8px]" width="17" height="15" viewBox="0 0 17 15"><path d="M5 2.500h11v7H6M11 10v3M7.500 13.500h7M1 1h4v4H1zM3 5v8h3" fill="none" stroke="#fff" /></svg>
      <span className="ml-[10px] w-[41px] font-['Open_Sans','Noto_Sans',sans-serif] text-[12px] tracking-[-0.600px]">11:38</span>
      <svg className="ml-[3px] mr-[24px]" width="17" height="16" viewBox="0 0 17 16"><path d="M.6.6h15.800v11.500H11L8.500 15 6 12.100H.6z" fill="none" stroke="#fff" strokeWidth="1.200" /></svg>
    </span>
  </div>
);

export default function App() {
  return (
    <div className="relative h-[768px] w-[1366px] overflow-hidden bg-white">
      <MailClient />
      <TeamViewer />
      <div className="relative"><Taskbar /></div>
    </div>
  );
}
